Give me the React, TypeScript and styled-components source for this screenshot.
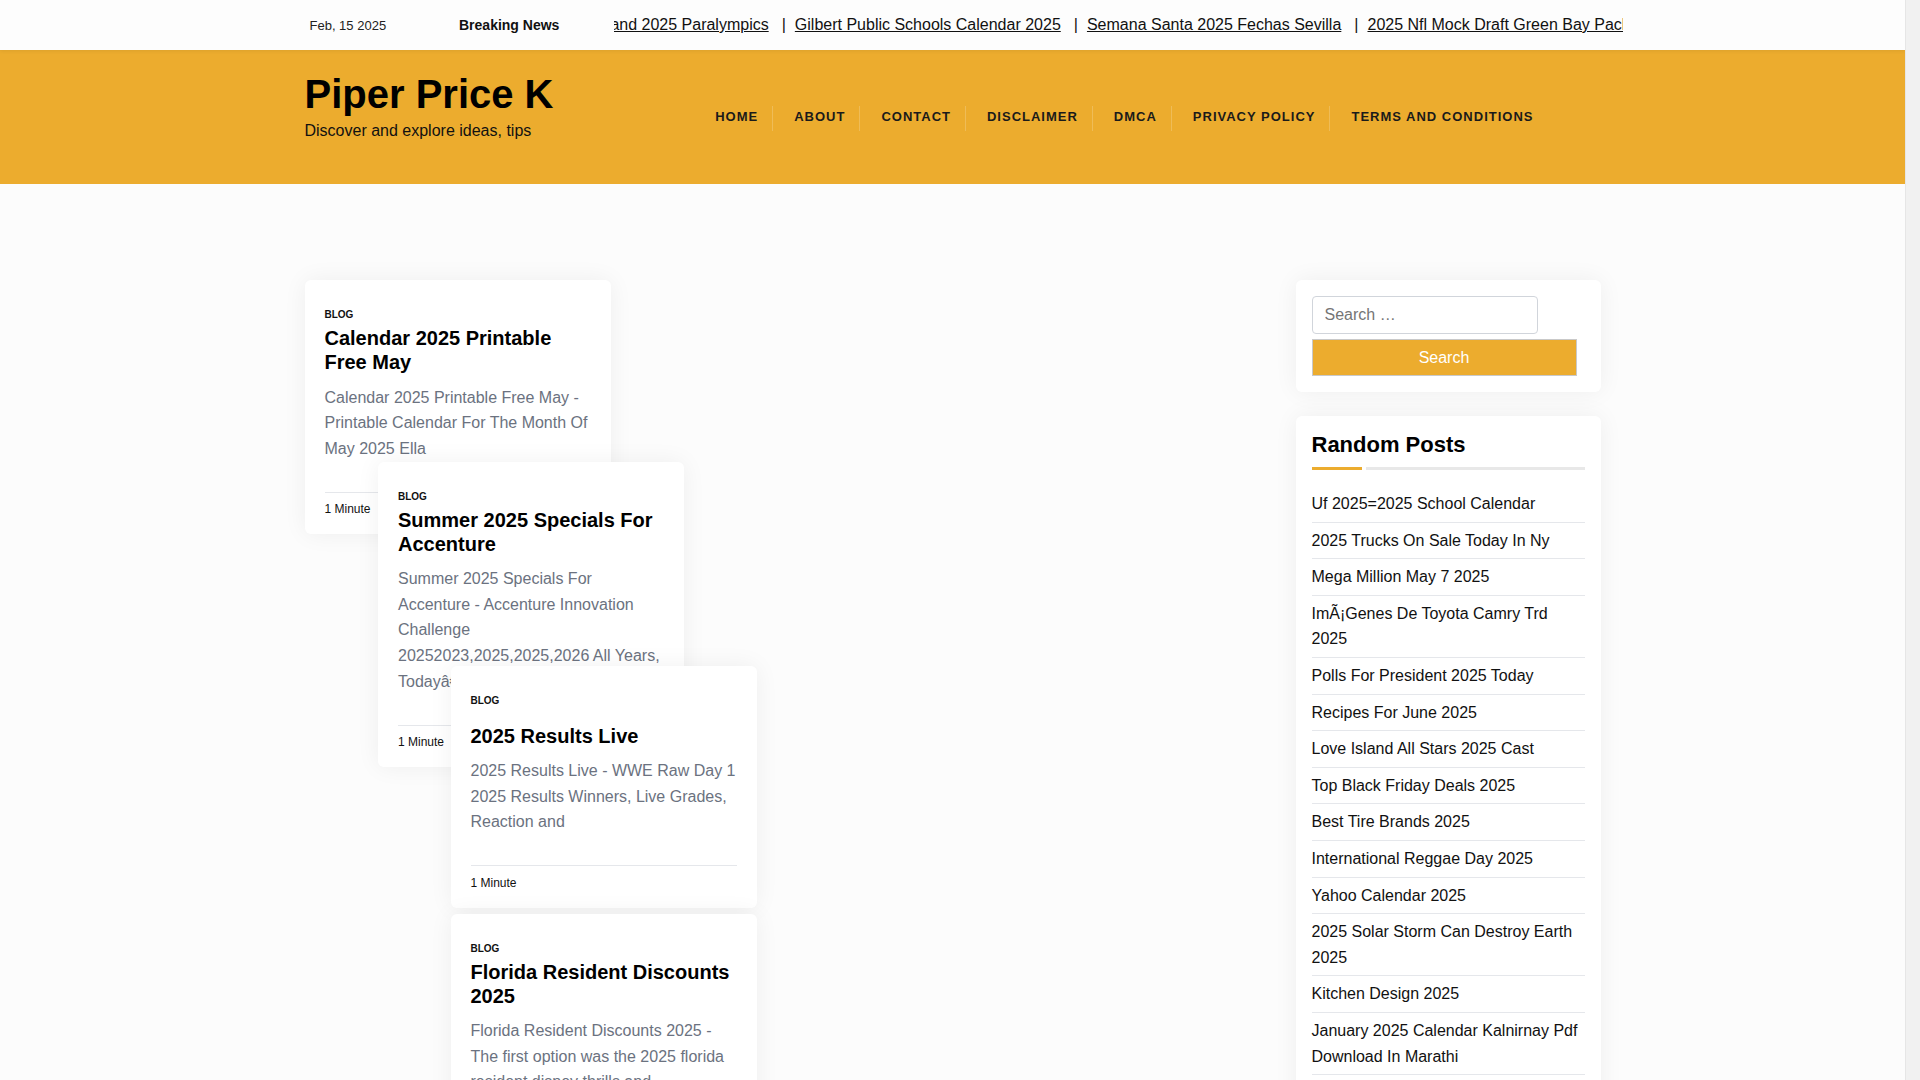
import React, { FC } from 'react'
import styled, { createGlobalStyle } from 'styled-components'

const accent = '#ecac2e'

const GlobalStyle = createGlobalStyle`
  html, body {
    margin     : 0;
    padding    : 0;
    background : #fcfcfc;
  }

  body {
    font-family   : "Liberation Sans", Arial, sans-serif;
    color         : #111;
    padding-right : 15px;
  }

  * { box-sizing : border-box; }
`

type Post = {
  title: string
  excerpt: string
  x: number
  y: number
  titleGap?: number
}

const tickerItems = [
  'and 2025 Paralympics',
  'Gilbert Public Schools Calendar 2025',
  'Semana Santa 2025 Fechas Sevilla',
  '2025 Nfl Mock Draft Green Bay Packers',
]

const navItems = [ 'Home', 'About', 'Contact', 'Disclaimer', 'DMCA', 'Privacy Policy', 'Terms and Conditions' ]

// masonry script placed these, they overlap in the original page
const posts: Post[] = [
  {
    title   : 'Calendar 2025 Printable Free May',
    excerpt : 'Calendar 2025 Printable Free May - Printable Calendar For The Month Of May 2025 Ella',
    x       : 0,
    y       : 0,
  },
  {
    title   : 'Summer 2025 Specials For Accenture',
    excerpt : 'Summer 2025 Specials For Accenture - Accenture Innovation Challenge 20252023,2025,2025,2026 All Years, Todayâ€™s',
    x       : 73.5,
    y       : 181.6,
  },
  {
    title    : '2025 Results Live',
    excerpt  : '2025 Results Live - WWE Raw Day 1 2025 Results Winners, Live Grades, Reaction and',
    x        : 146,
    y        : 386,
    titleGap : 15.5,
  },
  {
    title   : 'Florida Resident Discounts 2025',
    excerpt : 'Florida Resident Discounts 2025 - The first option was the 2025 florida resident disney thrills and',
    x       : 146,
    y       : 633.5,
  },
]

const randomPosts = [
  'Uf 2025=2025 School Calendar',
  '2025 Trucks On Sale Today In Ny',
  'Mega Million May 7 2025',
  'Im\u00C3\u00A1Genes De Toyota Camry Trd 2025',
  'Polls For President 2025 Today',
  'Recipes For June 2025',
  'Love Island All Stars 2025 Cast',
  'Top Black Friday Deals 2025',
  'Best Tire Brands 2025',
  'International Reggae Day 2025',
  'Yahoo Calendar 2025',
  '2025 Solar Storm Can Destroy Earth 2025',
  'Kitchen Design 2025',
  'January 2025 Calendar Kalnirnay Pdf Download In Marathi',
  'Nba Draft 2025 Mock Draft',
  'Holidays In June 2025',
]

const App: FC = () => {
  return (
    <>
      <GlobalStyle/>
      <TopBar>
        <TopInner>
          <DateText>Feb, 15 2025</DateText>
          <BreakingLabel>Breaking News</BreakingLabel>
          <Ticker>
            <TickerTrack>
              {tickerItems.map( ( item, i ) => (
                <React.Fragment key={item}>
                  {i > 0 && <TickerSep>|</TickerSep>}
                  <TickerLink href='#'>{item}</TickerLink>
                </React.Fragment>
              ) )}
            </TickerTrack>
          </Ticker>
        </TopInner>
      </TopBar>

      <Header>
        <HeaderInner>
          <Brand>
            <SiteTitle>Piper Price K</SiteTitle>
            <Tagline>Discover and explore ideas, tips</Tagline>
          </Brand>
          <Nav>
            {navItems.map( item => (
              <NavItem key={item}>
                <a href='#'>{item}</a>
              </NavItem>
            ) )}
          </Nav>
        </HeaderInner>
      </Header>

      <Main>
        <Masonry>
          {posts.map( post => (
            <Card key={post.title} $x={post.x} $y={post.y}>
              <Category>Blog</Category>
              <PostTitle $gap={post.titleGap ?? 4}>{post.title}</PostTitle>
              <Excerpt>{post.excerpt}</Excerpt>
              <Meta>1 Minute</Meta>
            </Card>
          ) )}
        </Masonry>

        <Sidebar>
          <Widget>
            <SearchInput type='search' placeholder='Search …'/>
            <SearchButton type='button'>Search</SearchButton>
          </Widget>
          <Widget>
            <WidgetTitle>Random Posts</WidgetTitle>
            <TitleBar>
              <span/>
              <span/>
            </TitleBar>
            <PostList>
              {randomPosts.map( p => (
                <li key={p}><a href='#'>{p}</a></li>
              ) )}
            </PostList>
          </Widget>
        </Sidebar>
      </Main>

      <ScrollTrack/>
    </>
  )
}

export default App

const Container = styled.div`
  max-width : 1296px;
  margin    : 0 auto;
`

const ScrollTrack = styled.div`
  position    : fixed;
  top         : 0;
  right       : 0;
  bottom      : 0;
  width       : 15px;
  background  : #f1f1f1;
  border-left : 1px solid #e6e6e6;
  z-index     : 10;
`

const TopBar = styled.div`
  height     : 50px;
  background : #fdfdfd;
  box-shadow : 0 1px 4px rgba(0, 0, 0, .07);
  position   : relative;
  z-index    : 2;
`

const TopInner = styled( Container )`
  display     : flex;
  align-items : center;
  height      : 100%;
`

const DateText = styled.span`
  flex-shrink  : 0;
  width        : 154.5px;
  padding-left : 5px;
  font-size    : 13px;
  color        : #222;
`

const BreakingLabel = styled.span`
  flex-shrink : 0;
  font-size   : 14px;
  font-weight : 700;
  color       : #111;
`

const Ticker = styled.div`
  flex         : 1;
  overflow     : hidden;
  margin-left  : 55px;
  margin-right : -22px;
  white-space  : nowrap;
`

const TickerTrack = styled.div`
  display     : inline-flex;
  align-items : center;
  margin-left : -4px;
  font-size   : 16px;
  line-height : 24px;
`

const TickerLink = styled.a`
  color           : #111;
  text-decoration : underline;
`

const TickerSep = styled.span`
  padding : 0 9px 0 13px;
  color   : #111;
`

const Header = styled.header`
  height     : 134px;
  background : ${accent};
`

const HeaderInner = styled( Container )`
  display     : flex;
  align-items : center;
  height      : 100%;
`

const Brand = styled.div`
  padding-bottom : 19px;
`

const SiteTitle = styled.h1`
  margin      : 0;
  font-size   : 40px;
  line-height : 45.6px;
  font-weight : 700;
  color       : #000;
`

const Tagline = styled.p`
  margin      : 0;
  font-size   : 16px;
  line-height : 1.6;
  color       : #111;
`

const Nav = styled.ul`
  display      : flex;
  list-style   : none;
  margin       : 3px 53px 0 auto;
  padding      : 0;
`

const NavItem = styled.li`
  height         : 25px;
  padding        : 0 14px 5px 21px;
  line-height    : 20px;
  border-left    : 1px solid rgba(255, 255, 255, .2);

  &:first-child {
    border-left : none;
  }

  a {
    font-size       : 13px;
    font-weight     : 700;
    letter-spacing  : 1px;
    text-transform  : uppercase;
    text-decoration : none;
    color           : #1a1a1a;
  }
`

const Main = styled( Container )`
  display               : grid;
  grid-template-columns : 1fr 305px;
  align-items           : start;
  padding-top           : 96px;
`

const Masonry = styled.div`
  position : relative;
  height   : 900px;
`

const Card = styled.article<{ $x: number, $y: number }>`
  position      : absolute;
  left          : ${p => p.$x}px;
  top           : ${p => p.$y}px;
  width         : 306px;
  padding       : 27px 20px 16px;
  background    : #fff;
  border-radius : 6px;
  box-shadow    : 0 0 24px rgba(0, 0, 0, .06);
`

const Category = styled.div`
  font-size      : 10px;
  line-height    : 15px;
  font-weight    : 700;
  text-transform : uppercase;
  color          : #111;
`

const PostTitle = styled.h2<{ $gap: number }>`
  margin      : ${p => p.$gap}px 0 0;
  font-size   : 20px;
  line-height : 24px;
  font-weight : 700;
  color       : #000;
`

const Excerpt = styled.p`
  margin      : 10.7px 0 30.5px;
  font-size   : 16px;
  line-height : 1.6;
  color       : #6b7280;
`

const Meta = styled.div`
  border-top  : 1px solid #e5e7eb;
  padding-top : 7.5px;
  font-size   : 12px;
  line-height : 18px;
  color       : #111;
`

const Sidebar = styled.aside`
  display        : flex;
  flex-direction : column;
  gap            : 24px;
`

const Widget = styled.section`
  padding       : 16px;
  background    : #fff;
  border-radius : 6px;
  box-shadow    : 0 0 24px rgba(0, 0, 0, .06);
`

const SearchInput = styled.input`
  display       : block;
  width         : 226px;
  height        : 38px;
  padding       : 0 12px;
  border        : 1px solid #d1d5db;
  border-radius : 4px;
  font-family   : inherit;
  font-size     : 16px;
  color         : #111;
  background    : #fff;
  outline       : none;

  &::placeholder {
    color : #757575;
  }
`

const SearchButton = styled.button`
  display     : block;
  width       : 265px;
  height      : 37px;
  margin-top  : 5px;
  border      : 1px solid #c9c9c9;
  background  : ${accent};
  font-family : inherit;
  font-size   : 16px;
  color       : #fff;
  cursor      : pointer;
`

const WidgetTitle = styled.h3`
  margin      : 0;
  font-size   : 22px;
  line-height : 1.2;
  font-weight : 700;
  color       : #000;
`

const TitleBar = styled.div`
  display    : flex;
  gap        : 4px;
  margin-top : 9px;
  height     : 3px;

  span:first-child {
    width      : 50px;
    background : ${accent};
  }

  span:last-child {
    flex       : 1;
    background : #e8e8e8;
  }
`

const PostList = styled.ul`
  list-style : none;
  margin     : 15.7px 0 0;
  padding    : 0;

  li {
    padding       : 5px 0;
    border-bottom : 1px solid #e5e7eb;
    font-size     : 16px;
    line-height   : 1.6;
  }

  a {
    color           : #111;
    text-decoration : none;
  }
`
